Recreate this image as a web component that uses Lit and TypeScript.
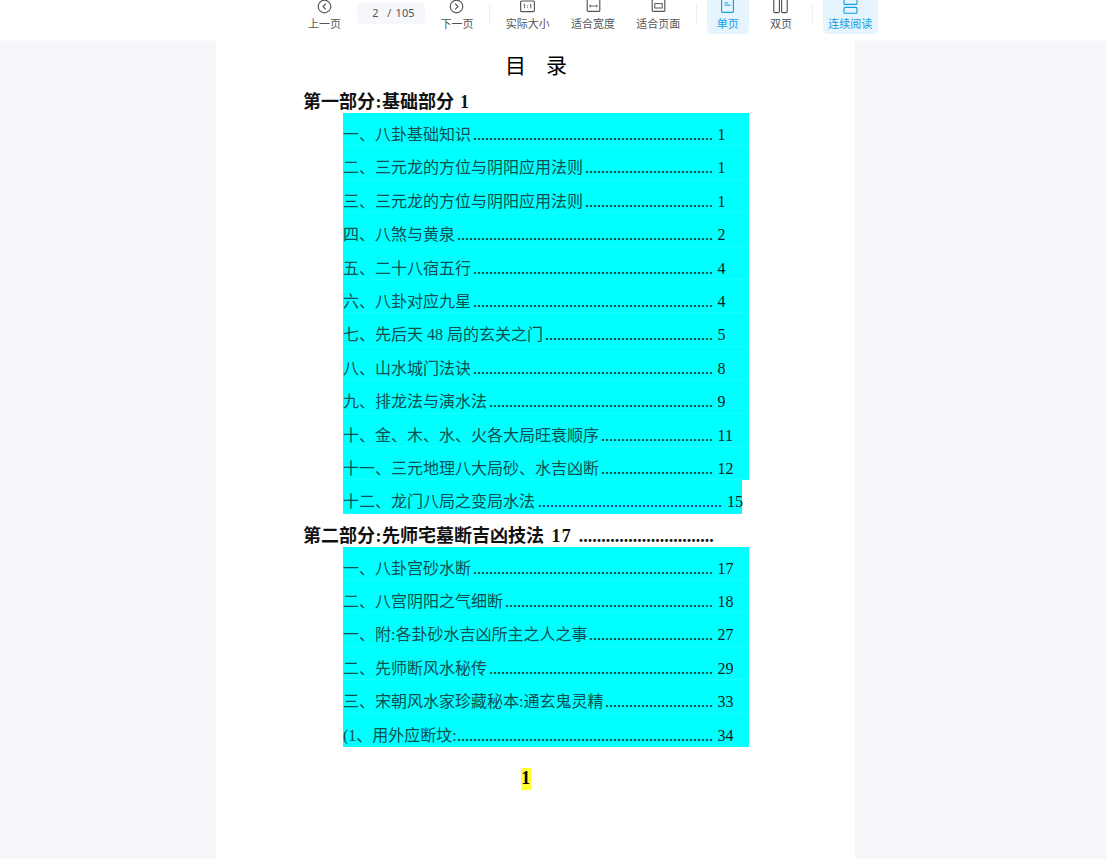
import { LitElement, html, css, svg } from "lit";
import { customElement } from "lit/decorators.js";

const icons: Record<string, unknown> = {
  prev: svg`<circle cx="7.5" cy="6.5" r="6.3"/><path d="M8.8 3.6 6 6.5l2.8 2.9"/>`,
  next: svg`<circle cx="7.5" cy="6.5" r="6.3"/><path d="M6.2 3.6 9 6.5l-2.8 2.9"/>`,
  actual: svg`<rect x=".6" y="1" width="13.8" height="10.6" rx="1"/><path d="M4.6 4.2v4M10.8 4.2v4M3.7 4.8l.9-.6M9.9 4.8l.9-.6M7.5 5v.8M7.5 7v.8" stroke-width=".9"/>`,
  width: svg`<rect x="1.2" y="-2" width="12.6" height="13.4" rx="1"/><path d="M3.6 6h7.8M5 4.8 3.6 6 5 7.2M10 4.8 11.4 6 10 7.2" stroke-width=".9"/>`,
  fit: svg`<rect x="1.2" y="-2" width="12.6" height="13.4" rx="1"/><rect x="3.8" y="3.6" width="7.4" height="4.4" stroke-width="1"/>`,
  single: svg`<rect x="1.6" y="-2" width="11.8" height="14.4" rx=".8"/><path d="M4.4 3h3.8M4.4 5.2h6" stroke-width="1"/>`,
  double: svg`<rect x=".8" y="-2" width="5.6" height="14.6" rx="1"/><rect x="8.6" y="-2" width="5.6" height="14.6" rx="1"/>`,
  cont: svg`<rect x="1" y="-3" width="13" height="7.4" rx="1"/><rect x="1" y="7.4" width="13" height="5.8" rx="1"/>`,
};

const icon = (n: string) => html`<svg class="ic" viewBox="0 0 15 13" fill="none" stroke="currentColor" stroke-width="1.15">${icons[n]}</svg>`;

type Row = { t: string; n: string; c: number; tight?: boolean };
const part1: Row[] = [
  { t: "一、八卦基础知识", n: "1", c: 60 },
  { t: "二、三元龙的方位与阴阳应用法则", n: "1", c: 32 },
  { t: "三、三元龙的方位与阴阳应用法则", n: "1", c: 32 },
  { t: "四、八煞与黄泉", n: "2", c: 64 },
  { t: "五、二十八宿五行", n: "4", c: 60 },
  { t: "六、八卦对应九星", n: "4", c: 60 },
  { t: "七、先后天 48 局的玄关之门", n: "5", c: 42 },
  { t: "八、山水城门法诀", n: "8", c: 60 },
  { t: "九、排龙法与演水法", n: "9", c: 56 },
  { t: "十、金、木、水、火各大局旺衰顺序", n: "11", c: 28 },
  { t: "十一、三元地理八大局砂、水吉凶断", n: "12", c: 28 },
  { t: "十二、龙门八局之变局水法", n: "15", c: 46, tight: true },
];
const part2: Row[] = [
  { t: "一、八卦宫砂水断", n: "17", c: 60 },
  { t: "二、八宫阴阳之气细断", n: "18", c: 52 },
  { t: "一、附:各卦砂水吉凶所主之人之事", n: "27", c: 31 },
  { t: "二、先师断风水秘传", n: "29", c: 56 },
  { t: "三、宋朝风水家珍藏秘本:通玄鬼灵精", n: "33", c: 27 },
  { t: "(1、用外应断坟:", n: "34", c: 64 },
];

@customElement("app-root")
export class AppRoot extends LitElement {
  static styles = css`
    :host { display: block; width: 1106px; height: 859px; overflow: hidden; background: #f5f7fa; position: relative;
      font-family: "Liberation Serif", "Noto Sans CJK SC", serif; color: #000; }
    .bar { height: 39px; background: #fff; display: flex; gap: 10.35px; padding-left: 303px; box-sizing: border-box;
      align-items: flex-start; font-family: "Noto Sans CJK SC", "Noto Sans", sans-serif; }
    .fade { height: 3px; background: linear-gradient(#fff, #f5f7fa); margin-bottom: -3px; }
    .item { width: 43px; height: 34px; flex: none; display: flex; flex-direction: column; align-items: center; color: #555;
      font-size: 11px; line-height: 14px; border-radius: 0 0 5px 5px; }
    .item.w { width: 55px; }
    .item.s { width: 42px; }
    .item.on { background: #e6f4fd; color: #12a0e4; }
    .item.back { margin-left: -0.8px; }
    .item.fwd { margin-right: 0.8px; }
    .ic { width: 15px; height: 13px; margin-bottom: 3px; overflow: visible; flex: none; }
    .page { width: 68px; height: 22px; margin: 2px 0 0 0.8px; flex: none; background: #f5f7fa; border-radius: 4px; box-sizing: border-box;
      padding-left: 15px; font: 11px/22px "Noto Sans", sans-serif; word-spacing: 1.5px; color: #555; white-space: pre; }
    .sep { width: 1px; height: 20px; margin-top: 4px; background: #eeeff2; flex: none; }
    .sheet { position: relative; width: 639px; height: 820px; margin-left: 216px; background: #fff; box-sizing: border-box; padding: 14px 0 0 87px; }
    .title { width: 500px; height: 27px; display: flex; gap: 20px; font-size: 21px; line-height: 27px; padding-left: 202px; box-sizing: border-box; }
    .head { font-size: 18px; font-weight: 700; line-height: 22px; height: 33px; padding-top: 11px; box-sizing: border-box; white-space: pre; color: #111; }
    .head.second { padding-top: 12px; line-height: 21px; }
    .head i { font-style: normal; margin: 0 0.5px; }
    .head b { letter-spacing: 1.4px; }
    .head.second b { margin-left: 1.5px; }
    .head u { text-decoration: none; margin-left: 2px; }
    .block { margin-left: 40px; display: flex; flex-direction: column; align-items: flex-start; }
    .row { width: 406px; height: 33.4px; background: #00ffff; display: flex; box-sizing: border-box; padding-top: 12px;
      font-size: 16px; line-height: 20px; white-space: pre; box-shadow: inset 0 -1px 0 #14ffff; }
    .row.tight { width: 399px; }
    .t { flex: none; color: #0e4f50; }
    .d { flex: 1; min-width: 0; text-align: right; color: #123; }
    .n { width: 31.5px; flex: none; margin-left: 4.5px; color: #102020; }
    .tight .n { width: 15px; margin-left: 5px; }
    .num { margin: 21px 0 0 217.7px; width: 10px; height: 21.5px; background: #ffff33; font-size: 18px; font-weight: 700; line-height: 21.5px; text-align: center; }
  `;

  private item(label: string, ic: string, cls = "") {
    return html`<div class="item ${cls}">${icon(ic)}<span>${label}</span></div>`;
  }
  private rows(r: Row[]) {
    return html`<div class="block">${r.map(x => html`<div class="row ${x.tight ? "tight" : ""}"><span class="t">${x.t}</span><span class="d">${".".repeat(x.c)}</span><span class="n">${x.n}</span></div>`)}</div>`;
  }
  render() {
    return html`
      <div class="bar">
        ${this.item("上一页", "prev")}
        <div class="page">2  / 105</div>
        ${this.item("下一页", "next")}
        <div class="sep"></div>
        ${this.item("实际大小", "actual", "w")}
        ${this.item("适合宽度", "width", "w")}
        ${this.item("适合页面", "fit", "w")}
        <div class="sep"></div>
        ${this.item("单页", "single", "s on back fwd")}
        ${this.item("双页", "double", "s")}
        <div class="sep"></div>
        ${this.item("连续阅读", "cont", "w on back")}
      </div>
      <div class="fade"></div>
      <div class="sheet">
        <div class="title"><span>目</span><span>录</span></div>
        <div class="head">第一部分<i>:</i>基础部分<b> 1</b></div>
        ${this.rows(part1)}
        <div class="head second">第二部分<i>:</i>先师宅墓断吉凶技法<b> 17</b><u> ${".".repeat(30)}</u></div>
        ${this.rows(part2)}
        <div class="num">1</div>
      </div>
    `;
  }
}
